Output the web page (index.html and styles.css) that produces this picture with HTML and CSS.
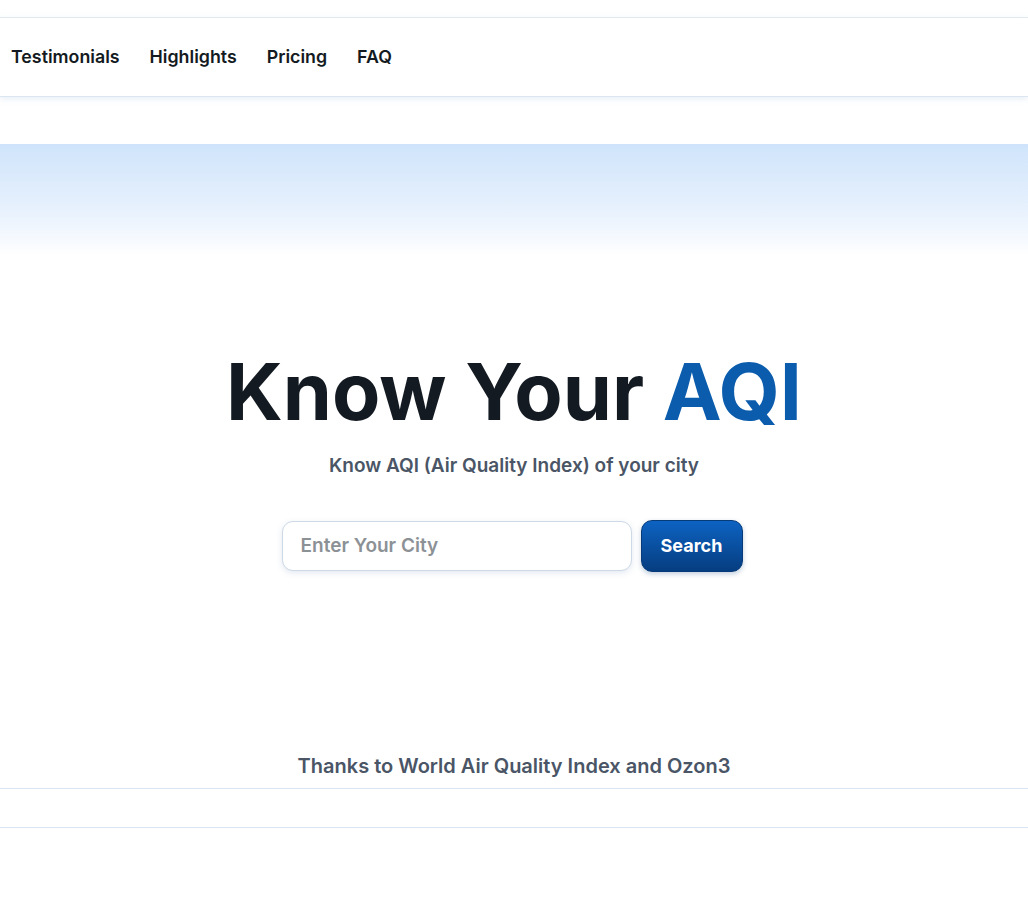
FILE: index.html
```html
<!DOCTYPE html>
<html lang="en">
<head>
<meta charset="utf-8">
<title>Know Your AQI</title>
<link rel="stylesheet" href="styles.css">
</head>
<body>
<div class="page">
  <header class="topbar">
    <nav class="nav">
      <a class="nav-link" href="#">Testimonials</a>
      <a class="nav-link" href="#">Highlights</a>
      <a class="nav-link" href="#">Pricing</a>
      <a class="nav-link" href="#">FAQ</a>
    </nav>
  </header>
  <section class="hero">
    <div class="hero-inner">
      <h1 class="title">Know Your <span class="accent">AQI</span></h1>
      <p class="subtitle">Know AQI (Air Quality Index) of your city</p>
      <form class="search" onsubmit="return false">
        <input class="search-input" type="text" placeholder="Enter Your City">
        <button class="search-btn" type="submit">Search</button>
      </form>
    </div>
  </section>
  <footer class="footer">
    <p class="credits">Thanks to World Air Quality Index and Ozon3</p>
    <div class="footer-band"></div>
  </footer>
</div>
</body>
</html>
```

FILE: styles.css
```css
* { box-sizing: border-box; }
html, body { margin: 0; padding: 0; background: #fff; }
body {
  font-family: Inter, "Noto Sans", "Liberation Sans", sans-serif;
  color: #131a21;
}
.page { padding-top: 17px; }
.topbar {
  height: 80px;
  border-top: 1px solid #e3e8ee;
  border-bottom: 1px solid #dce6f0;
  box-shadow: 0 2px 6px rgba(160, 190, 225, 0.25);
  display: flex;
  align-items: center;
  padding-left: 11px;
  padding-bottom: 2px;
}
.nav { display: flex; gap: 30px; }
.nav-link {
  font-size: 17.8px;
  font-weight: 600;
  color: #131a21;
  text-decoration: none;
}
.hero {
  margin-top: 47px;
  background: linear-gradient(180deg, #cfe4fb 0px, #e9f2fd 70px, #ffffff 112px, #ffffff 100%);
  padding-top: 200px;
  padding-bottom: 182px;
}
.hero-inner {
  display: flex;
  flex-direction: column;
  align-items: center;
}
.title {
  margin: 0;
  font-size: 79px;
  font-weight: 700;
  line-height: 1.2;
  color: #131a21;
}
.accent { color: #0b5cad; }
.subtitle {
  margin: 15px 0 0;
  font-size: 19px;
  font-weight: 600;
  color: #4a5566;
}
.search {
  margin: 43px 4px 0 0;
  display: flex;
  gap: 9px;
  align-items: center;
}
.search-input {
  width: 350px;
  height: 50px;
  border: 1px solid #cdd9e6;
  border-radius: 11px;
  padding: 0 18px;
  font-family: inherit;
  font-size: 19px;
  font-weight: 600;
  color: #131a21;
  box-shadow: 0 2px 6px rgba(100, 130, 170, 0.18);
  outline: none;
}
.search-input::placeholder { color: #8c9196; }
.search-btn {
  width: 102px;
  height: 52px;
  border: 1px solid #063a78;
  border-radius: 11px;
  background: linear-gradient(180deg, #0d63c2 0%, #063d80 100%);
  color: #fff;
  font-family: inherit;
  font-size: 18px;
  font-weight: 700;
  box-shadow: 0 2px 5px rgba(6, 60, 120, 0.25);
}
.footer { text-align: center; }
.credits {
  margin: 0;
  font-size: 20px;
  font-weight: 600;
  color: #4a5566;
  padding-bottom: 10px;
}
.footer-band {
  height: 40px;
  border-top: 1px solid #dbe6f0;
  border-bottom: 1px solid #dbe6f0;
}
```
